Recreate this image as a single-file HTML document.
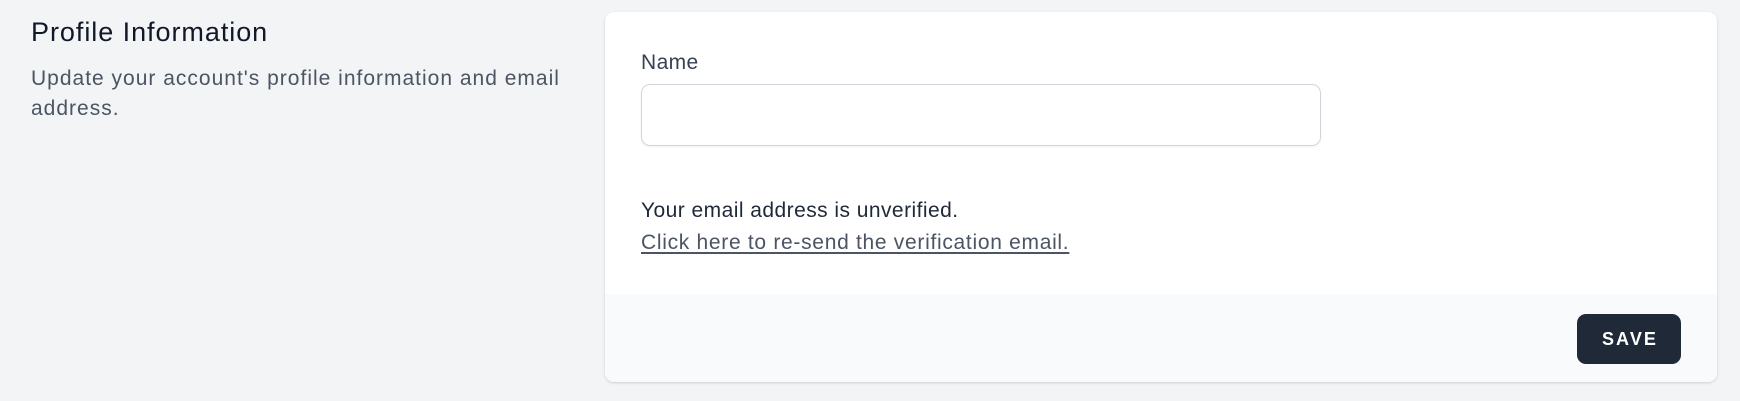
<!DOCTYPE html>
<html><head><meta charset="utf-8"><style>
*{box-sizing:border-box;margin:0;padding:0}
body{width:1740px;height:401px;background:#f3f4f6;font-family:"Liberation Sans",sans-serif;position:relative;overflow:hidden}
.t{position:absolute;left:31px;top:11px;font-size:27px;line-height:42px;color:#111827;letter-spacing:0.95px;white-space:nowrap}
.d{position:absolute;left:31px;top:64px;font-size:21px;line-height:30px;color:#4b5563;letter-spacing:1.0px;white-space:nowrap}
.card{position:absolute;left:605px;top:12px;width:1112px;height:370px;background:#fff;border-radius:9px;box-shadow:0 1px 3px rgba(0,0,0,.1),0 1px 2px rgba(0,0,0,.06);overflow:hidden}
.lbl{position:absolute;left:36px;top:36px;font-size:21px;line-height:30px;color:#374151;letter-spacing:0.4px}
.inp{position:absolute;left:36px;top:72px;width:680px;height:62px;border:1.5px solid #d1d5db;border-radius:9px;box-shadow:0 1px 2px rgba(0,0,0,.05)}
.u{position:absolute;left:36px;top:184px;font-size:21px;line-height:30px;color:#1f2937;letter-spacing:0.45px;white-space:nowrap}
.lk{position:absolute;left:36px;top:216px;font-size:21px;line-height:30px;color:#4b5563;text-decoration:underline;text-underline-offset:3px;letter-spacing:0.7px;white-space:nowrap}
.ft{position:absolute;left:0;top:282px;width:1112px;height:88px;background:#f9fafb}
.btn{position:absolute;left:972px;top:20px;width:104px;height:50px;background:#1f2937;border-radius:9px;color:#fff;font-weight:bold;font-size:18px;letter-spacing:2.1px;text-align:center;line-height:50px;padding-left:2px}
</style></head><body>
<div class="t">Profile Information</div>
<div class="d">Update your account's profile information and email<br>address.</div>
<div class="card">
<div class="lbl">Name</div>
<div class="inp"></div>
<div class="u">Your email address is unverified.</div>
<div class="lk">Click here to re-send the verification email.</div>
<div class="ft"><div class="btn">SAVE</div></div>
</div>
</body></html>
